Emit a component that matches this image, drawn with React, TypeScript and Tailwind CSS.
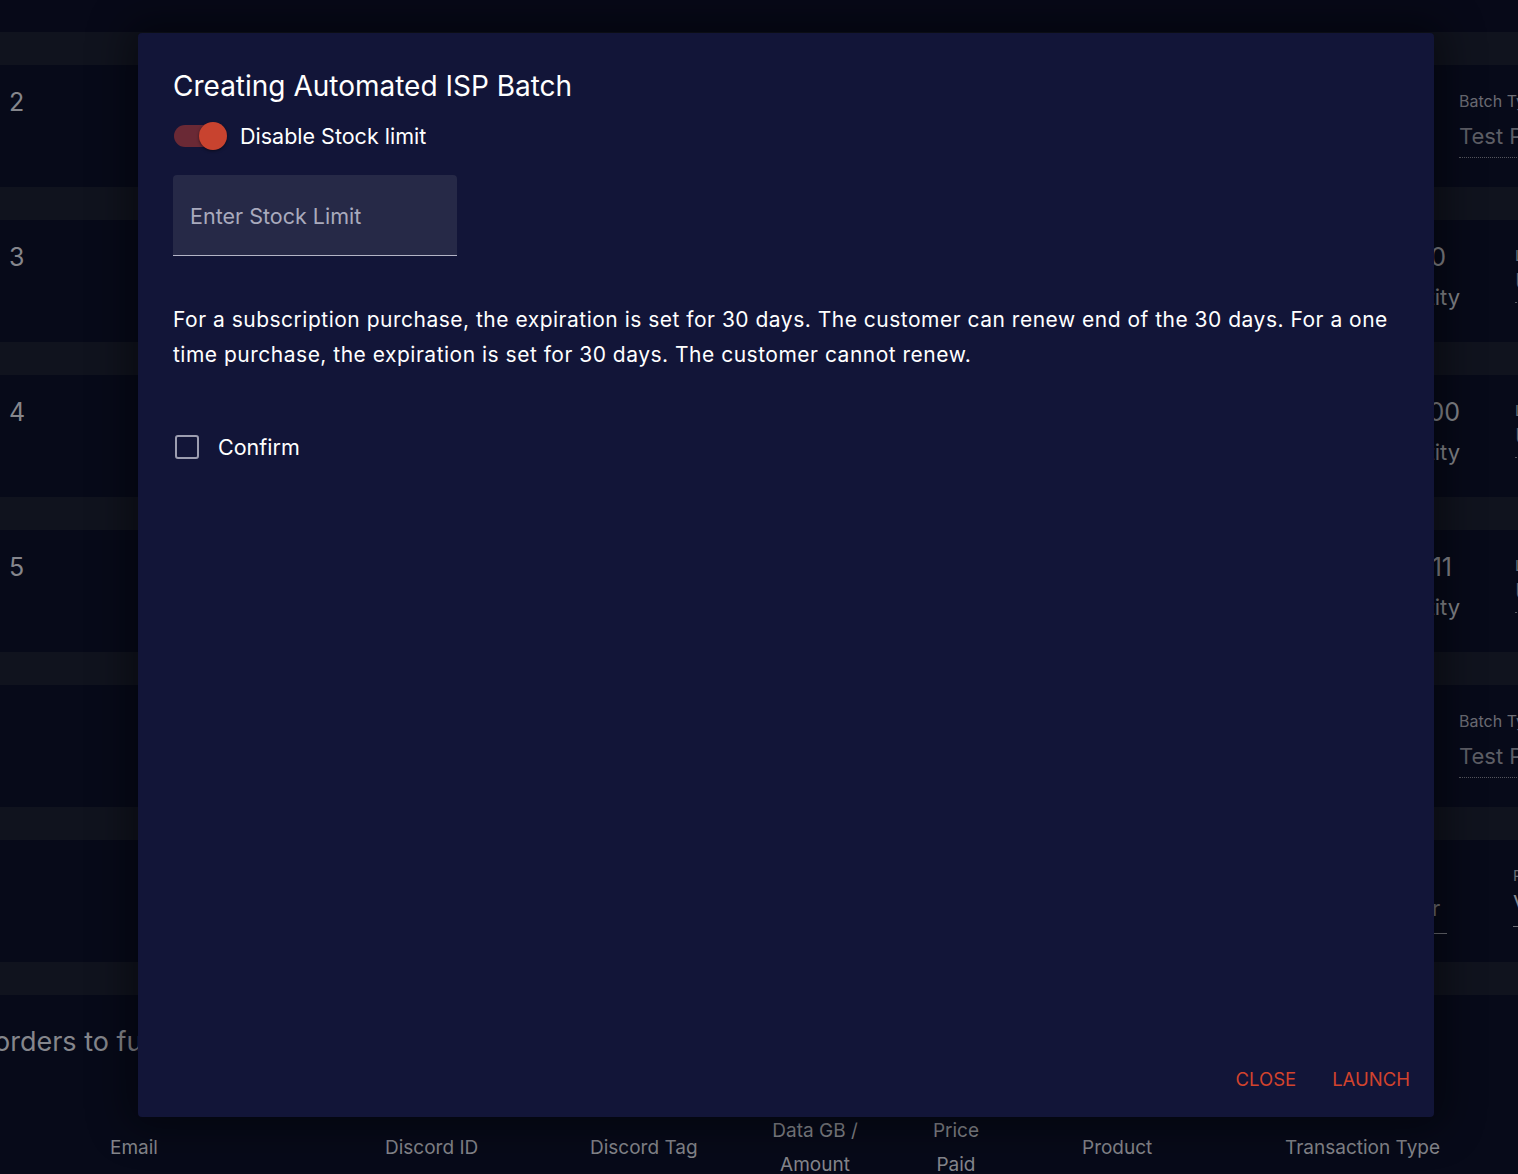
import React from "react";

const font = { fontFamily: "Inter, Lato, sans-serif" };

function Stripe() {
  return <div className="h-[33px] bg-[#10131e] shrink-0" />;
}

function NumRow({ n, right }: { n?: string; right?: React.ReactNode }) {
  return (
    <div className="h-[122px] shrink-0 flex bg-[#070a19] relative">
      <div className="w-[1432px] shrink-0 pl-[9px] pt-[19px] text-[25px] text-[#85868c]">{n}</div>
      <div className="flex-1 relative">{right}</div>
    </div>
  );
}

function BatchCell() {
  return (
    <div className="pl-[27px] pt-[26px]">
      <div className="text-[16px] text-[#6b6c74] leading-[20px] whitespace-nowrap">Batch Type</div>
      <div className="text-[22px] text-[#5d5e66] leading-[30px] mt-[10px] whitespace-nowrap">Test Product</div>
      <div className="border-b border-dotted border-[#55565e] mt-[6px]" />
    </div>
  );
}

function QtyCell({ v, end }: { v: string; end: string }) {
  return (
    <div className="flex">
      <div className="w-[83px] shrink-0 -ml-[55px] pt-[22px] flex flex-col items-end">
        <div className={"text-[25px] text-[#85868c] leading-[30px] whitespace-nowrap " + end}>{v}</div>
        <div className="text-[22px] text-[#85868c] leading-[30px] mt-[10px] whitespace-nowrap">Quantity</div>
      </div>
      <div className="ml-[55px] pt-[26px] w-[200px]">
        <div className="text-[15px] text-[#6b6c74] leading-[20px] whitespace-nowrap">Location</div>
        <div className="text-[22px] text-[#5d5e66] leading-[30px] whitespace-nowrap">US</div>
        <div className="border-b border-dotted border-[#55565e] mt-[6px]" />
      </div>
    </div>
  );
}

function SelectCell() {
  return (
    <div className="flex">
      <div className="w-[15px] pt-[56px]">
        <div className="text-[22px] text-[#6b6c74] leading-[24px] whitespace-nowrap overflow-hidden">r</div>
        <div className="border-b border-[#6b6c74] mt-[13px]" />
      </div>
      <div className="ml-[66px] pt-[26px] w-[200px]">
        <div className="text-[15px] text-[#6b6c74] leading-[20px] whitespace-nowrap">Product</div>
        <div className="text-[22px] text-[#85868c] leading-[30px] mt-[2px] whitespace-nowrap">V</div>
        <div className="border-b border-[#6b6c74] mt-[8px]" />
      </div>
    </div>
  );
}

export default function App() {
  return (
    <div className="relative w-[1518px] h-[1174px] overflow-hidden bg-[#070a19]" style={font}>
      {/* background page */}
      <div className="flex flex-col h-full">
        <div className="h-[32px] shrink-0 bg-[#070918]" />
        <Stripe />
        <NumRow n="2" right={<BatchCell />} />
        <Stripe />
        <NumRow n="3" right={<QtyCell v="100" end="mr-[14px]" />} />
        <Stripe />
        <NumRow n="4" right={<QtyCell v="1000" end="mr-0" />} />
        <Stripe />
        <NumRow n="5" right={<QtyCell v="11" end="mr-[8px]" />} />
        <Stripe />
        <NumRow right={<BatchCell />} />
        <Stripe />
        <NumRow right={<SelectCell />} />
        <Stripe />
        <div className="flex-1 flex flex-col bg-[#070a19]">
          <div className="pt-[29px] -ml-[6px] text-[27px] text-[#85868c] leading-[36px] whitespace-nowrap">
            orders to fulfill
          </div>
          <div className="mt-[54px] flex items-center text-[19px] text-[#85868c] leading-[34px] h-[68px]">
            <div className="w-[110px]" />
            <div className="w-[275px]">Email</div>
            <div className="w-[205px]">Discord ID</div>
            <div className="w-[170px]">Discord Tag</div>
            <div className="w-[110px] text-center">Data GB /<br />Amount</div>
            <div className="w-[56px]" />
            <div className="w-[60px] text-center">Price<br />Paid</div>
            <div className="w-[96px]" />
            <div className="w-[203px]">Product</div>
            <div>Transaction Type</div>
          </div>
        </div>
      </div>

      {/* modal */}
      <div className="absolute left-[138px] top-[33px] w-[1296px] h-[1084px] rounded-[4px] bg-[#121538] shadow-[0_0_40px_10px_rgba(0,0,0,0.45)] flex flex-col pl-[35px] pr-[24px]">
        <div className="pt-[36px] text-[28px] leading-[34px] text-white whitespace-nowrap">
          Creating Automated ISP Batch
        </div>
        <div className="flex items-center mt-[16px] h-[34px]">
          <div className="relative w-[54px] h-[28px] flex items-center">
            <div className="ml-[1px] w-[52px] h-[22px] rounded-full bg-[#6a2935]" />
            <div className="absolute right-0 top-0 w-[28px] h-[28px] rounded-full bg-[#c8432f] shadow-[0_1px_3px_rgba(0,0,0,0.5)]" />
          </div>
          <span className="ml-[13px] text-[21.5px] text-white leading-[28px]">Disable Stock limit</span>
        </div>
        <div className="mt-[22px] w-[284px] h-[81px] bg-[#262947] rounded-t-[4px] border-b border-[#b3b4c6] flex items-center pl-[17px]">
          <span className="text-[21.5px] text-[#a9aabd] leading-[28px] pt-[2px]">Enter Stock Limit</span>
        </div>
        <p className="mt-[46px] text-[21px] tracking-[0.5px] leading-[35px] text-white pr-[10px]">
          For a subscription purchase, the expiration is set for 30 days. The customer can renew end of the 30 days. For a one time purchase, the expiration is set for 30 days. The customer cannot renew.
        </p>
        <div className="mt-[60px] flex items-center h-[30px]">
          <div className="ml-[2px] w-[24px] h-[24px] rounded-[3px] border-[2px] border-[#9c9db0]" />
          <span className="ml-[19px] text-[21.5px] text-white leading-[28px]">Confirm</span>
        </div>
        <div className="flex-1" />
        <div className="flex justify-end items-center gap-[36px] pb-[26px] text-[18.5px] text-[#d2432d] leading-[24px]">
          <span>CLOSE</span>
          <span>LAUNCH</span>
        </div>
      </div>
    </div>
  );
}
